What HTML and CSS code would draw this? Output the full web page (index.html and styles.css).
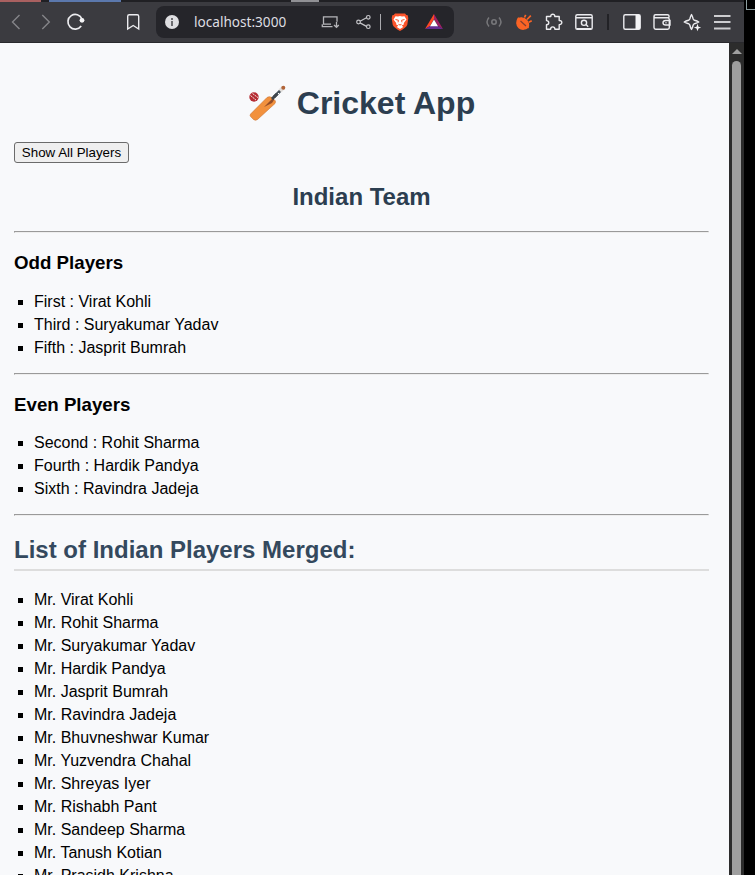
FILE: index.html
```html
<!DOCTYPE html>
<html lang="en">
<head>
<meta charset="utf-8">
<title>Cricket App</title>
<link rel="stylesheet" href="styles.css">
</head>
<body>
<div class="window">
  <div class="tabstrip"><i class="tab red"></i><i class="tab blue"></i><i class="tab gray"></i></div>
  <div class="toolbar">
    <svg class="icon dim" viewBox="0 0 30 30"><path d="M18.5 8 11.5 15l7 7"/></svg>
    <svg class="icon dim" viewBox="0 0 30 30"><path d="M11.3 8l7 7-7 7"/></svg>
    <svg class="icon" viewBox="0 0 30 30"><path stroke-width="1.7" d="M21 12a7.3 7.3 0 1 0-.8 7"/><circle cx="21" cy="13.3" r="2.4" class="fill"/></svg>
    <svg class="icon bookmark" viewBox="0 0 30 30"><path d="M9.7 9.2q0-1.5 1.5-1.5h8q1.500 0 1.500 1.500V22l-5.500-3.500L9.700 22z"/></svg>
    <div class="address">
      <svg class="info" viewBox="0 0 14 14"><circle cx="7" cy="7" r="7" fill="#dedee1"/><path d="M7 6v5" stroke="#454549" stroke-width="1.500"/><circle cx="7" cy="3.900" r="1" fill="#454549"/></svg>
      <span class="url">localhost:3000</span>
      <svg class="icon send" viewBox="0 0 30 30"><path d="M8.500 17V9.800h13.500v5M7.300 17.200v2.500h10.200M8 17.200h8M21.500 15v5M19 18l2.500 2.300 2.300-2.300" stroke-width="1.300"/></svg>
      <svg class="icon share" viewBox="0 0 30 30"><path d="M11 14.300l6.500-3.500M11 15.900l6.500 3.500" stroke-width="1.200"/><g stroke-width="1.200"><circle cx="9.500" cy="15" r="1.800"/><circle cx="19.300" cy="10.300" r="1.800"/><circle cx="19.300" cy="19.700" r="1.800"/></g></svg>
      <i class="bar"></i>
      <svg class="icon lion" viewBox="0 0 30 30"><path d="M10 6.500h10l1.300 1.400 1.400.4.600 3-1 6.500c-.4 2-3.700 4.200-7.300 6.300-3.600-2.100-6.900-4.300-7.300-6.300l-1-6.500.6-3 1.400-.4z" fill="#fb542b" stroke="none"/><path d="M10.500 9.300l2.500.3 2-.6 2 .6 2.500-.3 2 3.200-2.700 3.500 0 1.500-2.100 1 1.500 1.500L15 22l-3.200-2 1.500-1.500-2.100-1V16l-2.700-3.500z" fill="#fff" stroke="none"/><path d="M10.500 12.500l3 .8-.5 2M19.500 12.500l-3 .8.500 2M13.500 17.300l1.500.7 1.500-.7" stroke="#fb542b" stroke-width="1"/></svg>
      <svg class="icon bat-logo" viewBox="0 0 30 30"><path d="M15 7L6 22l5-3 4-7z" fill="#ff4724" stroke="none"/><path d="M15 7l9 15-5-3-4-7z" fill="#9e1f63" stroke="none"/><path d="M6 22h18l-5-3h-8z" fill="#662d91" stroke="none"/><path d="M15 12.500l4 6.700h-8z" fill="#fff" stroke="none"/></svg>
    </div>
    <svg class="icon first-ext muted" viewBox="0 0 30 30"><circle cx="15" cy="15" r="2.200" stroke-width="1.600"/><path d="M10 10.500q-4 4.500 0 9M20 10.500q4 4.500 0 9" stroke-width="1.500"/></svg>
    <svg class="icon" viewBox="0 0 30 30"><path d="M9.500 11.300l9.500 9c-2.600 2.400-6.500 2.500-9 .3-2.600-2.300-2.900-6.500-.5-9.300z" fill="#fb6425" stroke="#fb6425" stroke-linejoin="round"/><path d="M9.500 11.300q5-1.500 8 2t1.500 7z" fill="#fb6425" stroke="#fb6425"/><path d="M15.500 10.500l1.200-2.700M18 12.500l3.800-3.800M19.800 15.200l2.900-1.400" stroke="#fb6425" stroke-width="1.700"/><path d="M11.500 14l5.500 5" stroke="#803e30" stroke-width="1.200"/></svg>
    <svg class="icon" viewBox="0 0 30 30"><path stroke-linejoin="round" d="M7.500 9.500h4.300c-.5-3 4.400-3 4 0h4.400v4c3.500-.2 3.500 4.300 0 4.200v4.600h-4.300c0-3.300-4.300-3.300-4.300 0H7.500v-4.500c3-.2 3-4.200 0-4.200z"/></svg>
    <svg class="icon" viewBox="0 0 30 30"><rect x="6.800" y="7.800" width="16.400" height="14.500" rx="1.500"/><path d="M7 10.700h16M17 17.500l2.200 2.200M8 21.700h14"/><circle cx="15" cy="15.800" r="2.600"/></svg>
    <i class="divider"></i>
    <svg class="icon" viewBox="0 0 30 30"><rect x="6.800" y="7.800" width="16.400" height="14.500" rx="1.500"/><path class="fill" d="M18.500 8H23v14h-4.500z"/></svg>
    <svg class="icon" viewBox="0 0 30 30"><path d="M22 10.500V9q0-1.300-1.500-1.300h-12Q7 7.700 7 9.200v11.300q0 1.700 1.700 1.700h12q1.600 0 1.600-1.600v-8q0-1.800-1.600-1.800H8.500Q7 10.700 7 9.300M23 13.500h-4.300q-2.700 0-2.700 2.200 0 2.300 2.700 2.300H23zM18.500 15.800h1"/></svg>
    <svg class="icon" viewBox="0 0 30 30"><path stroke-linejoin="round" d="M14.500 7.500q1 1.700 1.700 4.500.4 1 1.300 1.300 2.700.7 4.300 1.700-1.600 1-4.300 1.700-.9.300-1.300 1.300-.7 2.800-1.700 4.500-1-1.700-1.700-4.500-.4-1-1.300-1.300Q8.800 16 7.200 15q1.600-1 4.300-1.700.9-.3 1.300-1.300.7-2.800 1.700-4.500z"/><path d="M20.500 16.700l1 3 2.700.8-2.700.9-1 2.800-1-2.800-2.700-.9 2.700-.8z" class="fill"/></svg>
    <svg class="icon" viewBox="0 0 30 30"><path d="M7 9h16.500M7 15h16.500M7 21.500h16.500" stroke="#cdcdd0" stroke-width="1.900"/></svg>
  </div>
  <div class="viewport">
    <main>
      <h1><svg class="cricket" viewBox="0 0 40 40"><path d="M27 13L36 4" stroke="#46515a" stroke-width="3"/><path d="M33 7l3.300-3.300" stroke="#e1dedb" stroke-width="4"/><circle cx="36.300" cy="3.800" r="2" fill="#b16438"/><path d="M31 9l2 2" stroke="#fff" stroke-width="1"/><path d="M20 13.500q2-1.700 5 0l3 3q1 1 0 3L10.500 35.500q-2 1.500-4 0L3.600 32.500q-1-1 0-2.500z" fill="#f2913d" stroke="#cb7432" stroke-width=".6"/><path d="M27 13L17 23l8-4 2-3z" fill="#934c27"/><path d="M30 10l-5 5" stroke="#3f464d" stroke-width="3"/><circle cx="7" cy="13" r="4.700" fill="#b52b33"/><path d="M3.500 11.500l6 5M5.500 9.500l6 4.500" stroke="#eee2d9" stroke-width="1" stroke-dasharray="2 .6"/></svg><span>Cricket App</span></h1>
      <button type="button">Show All Players</button>
      <h2 class="team">Indian Team</h2>
      <hr>
      <h3>Odd Players</h3>
      <ul class="odd"><li>First : Virat Kohli</li><li>Third : Suryakumar Yadav</li><li>Fifth : Jasprit Bumrah</li></ul>
      <hr>
      <h3>Even Players</h3>
      <ul><li>Second : Rohit Sharma</li><li>Fourth : Hardik Pandya</li><li>Sixth : Ravindra Jadeja</li></ul>
      <hr>
      <h2 class="merged">List of Indian Players Merged:</h2>
      <ul><li>Mr. Virat Kohli</li><li>Mr. Rohit Sharma</li><li>Mr. Suryakumar Yadav</li><li>Mr. Hardik Pandya</li><li>Mr. Jasprit Bumrah</li><li>Mr. Ravindra Jadeja</li><li>Mr. Bhuvneshwar Kumar</li><li>Mr. Yuzvendra Chahal</li><li>Mr. Shreyas Iyer</li><li>Mr. Rishabh Pant</li><li>Mr. Sandeep Sharma</li><li>Mr. Tanush Kotian</li><li>Mr. Prasidh Krishna</li></ul>
    </main>
    <div class="scrollbar"><i class="arrow"></i><i class="thumb"></i></div>
  </div>
</div>
<aside class="desktop"><i class="sliver"></i></aside>
</body>
</html>
```
FILE: styles.css
```css
* { box-sizing: border-box; }
body { margin: 0; height: 875px; display: flex; overflow: hidden; background: #000; font-family: "Liberation Sans", Arial, sans-serif; }
.window { width: 744px; height: 875px; display: flex; flex-direction: column; }
.tabstrip { height: 2px; flex: none; display: flex; background: #202024; }
.tab { height: 2px; }
.red { width: 41px; background: #a96060; }
.blue { width: 72px; margin-left: 8px; background: #5b78ad; }
.gray { width: 28px; margin-left: 170px; background: #919195; }
.toolbar { height: 41px; flex: none; display: flex; align-items: center; padding-left: 1px; background: #3b3b40; border-bottom: 1px solid #29292d; }
.icon { width: 30px; height: 30px; flex: none; fill: none; stroke: #ececef; stroke-width: 1.4; }
.icon .fill { fill: #f4f4f6; stroke: none; }
.dim { stroke: #858589; }
.muted { stroke: #77777a; }
.bookmark { margin-left: 27px; }
.address { width: 298px; height: 32px; margin-left: 8px; display: flex; align-items: center; background: #25252a; border-radius: 8px; }
.info { width: 14px; height: 14px; margin-left: 9px; fill: none; }
.url { width: 92px; margin-left: 15px; color: #dedee1; font: 13.6px/18px "Noto Sans", sans-serif; white-space: nowrap; }
.send { margin-left: 29px; stroke: #b5b5b9; }
.share { margin-left: 4px; stroke: #c5c5c9; }
.bar { width: 1px; height: 16px; margin-left: 1px; background: #aaaaae; }
.lion { margin-left: 4px; }
.bat-logo { margin-left: 4px; }
.first-ext { margin-left: 25px; }
.divider { width: 2px; height: 16px; margin: 0 8px; background: #222226; }
.viewport { height: 832px; display: flex; background: #f8f9fb; overflow: hidden; }
main { width: 729px; padding: 42px 20px 0 14px; font-size: 16px; line-height: 18px; color: #000; }
h1, h2, h3, ul { margin: 0; }
h1 { height: 37px; display: flex; justify-content: center; font-size: 32px; line-height: 37px; color: #2c3e50; }
.cricket { width: 40px; height: 40px; margin: -1px 10px 0 -1px; fill: none; }
button { display: block; width: 115px; height: 21px; margin: 20px 0 0; padding: 0; border: 1px solid #6b6b6b; border-radius: 3px; background: #efefef; color: #000; font: 13.333px "Liberation Sans", Arial, sans-serif; }
h2 { font-size: 24px; line-height: 27px; color: #2c3e50; }
.team { margin-top: 20px; text-align: center; }
hr { height: 2px; margin: 21px 0 0; border: 1px solid; border-color: #9a9a9a #eeeeee #eeeeee #9a9a9a; }
ul + hr { margin-top: 16px; }
h3 { margin-top: 19px; font-size: 18.72px; line-height: 22px; }
ul { margin-top: 18px; padding-left: 20px; list-style: square; }
.odd { margin-top: 19px; }
li + li { margin-top: 5px; }
.merged { margin-top: 20px; padding-bottom: 6px; border-bottom: 2px solid #ddd; color: #34495e; }
.merged + ul { margin-top: 20px; }
.scrollbar { width: 15px; padding-top: 6px; display: flex; flex-direction: column; align-items: center; background: #2c2c2c; }
.arrow { border: 5px solid transparent; border-top: 0; border-bottom-color: #a0a0a0; }
.thumb { width: 9px; flex: 1; margin-top: 7px; background: #9f9f9f; border-radius: 5px 5px 0 0; }
.desktop { width: 11px; background: #000; padding-left: 2px; }
.sliver { display: block; width: 9px; height: 10px; border: solid #8d9ea0; border-width: 0 0 1px 1px; }
```
